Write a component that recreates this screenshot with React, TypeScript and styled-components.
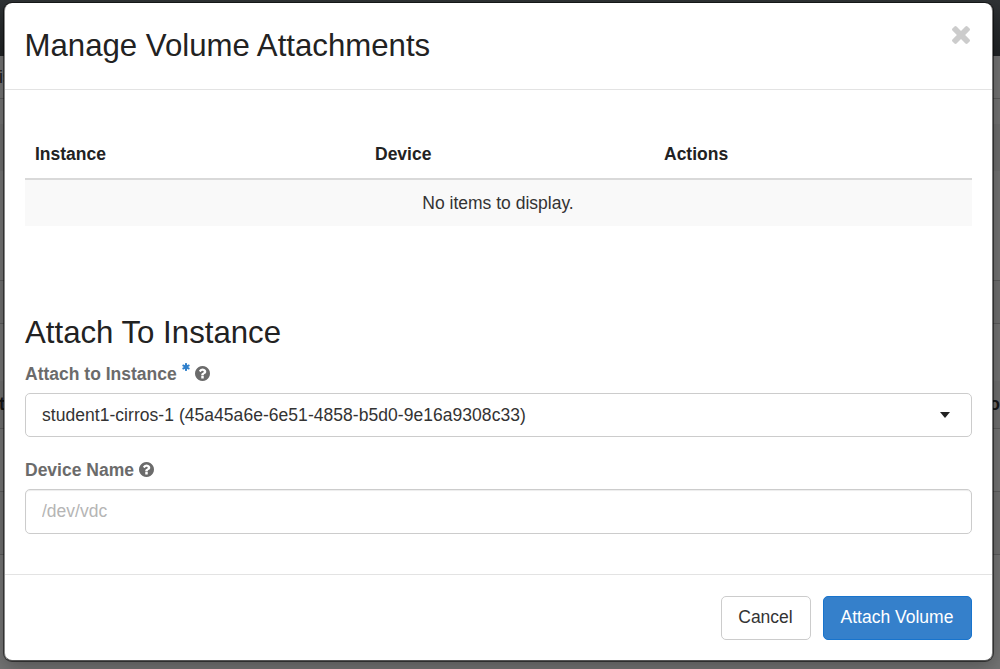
import React from "react";
import styled, { createGlobalStyle } from "styled-components";

const GlobalStyle = createGlobalStyle`
  *, *::before, *::after { box-sizing: border-box; }
  body {
    margin: 0;
    overflow: hidden;
    font-family: "Liberation Sans", Arial, sans-serif;
    font-size: 17.5px;
    color: #333;
  }
`;

const Page = styled.div`
  position: relative;
  display: flex;
  flex-direction: column;
  height: 669px;
  overflow: hidden;
  background: #747474;
`;

const NavBar = styled.div`
  height: 56px;
  flex: none;
  background: linear-gradient(#2f3335, #1f2224);
`;

const PageRow = styled.div<{ $height: number; $shade?: string; $plain?: boolean }>`
  display: flex;
  justify-content: space-between;
  align-items: center;
  flex: none;
  height: ${(p) => p.$height}px;
  background: ${(p) => p.$shade ?? "#737373"};
  border-bottom: ${(p) => (p.$plain ? "0" : "1px solid #5c5c5c")};
  color: #161616;
`;

const PageText = styled.span<{ $bold?: boolean; $shift?: number }>`
  font-weight: ${(p) => (p.$bold ? 700 : 400)};
  margin: 0 ${(p) => p.$shift ?? 0}px;
`;

const Dialog = styled.section`
  position: absolute;
  top: 3px;
  left: 4px;
  width: 989px;
  height: 658px;
  display: flex;
  flex-direction: column;
  background: #fff;
  border: 1px solid transparent;
  border-width: 0 1px 1px;
  border-color: transparent #777 #555 #888;
  border-radius: 8px;
  box-shadow: 0 0 0 1px rgba(0, 0, 0, 0.5), 0 6px 19px rgba(0, 0, 0, 0.28);
`;

const DialogHeader = styled.header`
  display: flex;
  justify-content: space-between;
  align-items: flex-start;
  height: 87px;
  padding: 24px 22px 0 19.5px;
  border-bottom: 1px solid #e3e3e3;
`;

const Heading = styled.h3`
  margin: 0;
  font-size: 31.2px;
  line-height: 38px;
  font-weight: 400;
  color: #222;
`;

const CloseButton = styled.button`
  display: flex;
  margin-top: -1px;
  padding: 0;
  border: 0;
  background: none;
  color: #ccc;
`;

const DialogBody = styled.div`
  flex: 1;
  padding: 40px 20px 0;
`;

const Table = styled.div`
  display: grid;
  grid-template-columns: 340px 289px 1fr;
  margin-bottom: 88px;
`;

const HeadCell = styled.div`
  height: 50px;
  padding: 12px 10px 0;
  line-height: 24px;
  font-weight: 700;
  color: #222;
  border-bottom: 2px solid #d9d9d9;
`;

const EmptyCell = styled.div`
  grid-column: 1 / -1;
  height: 46px;
  line-height: 46px;
  text-align: center;
  text-indent: -1px;
  background: #f9f9f9;
`;

const FieldSet = styled.div`
  padding-top: 10px;
`;

const Field = styled.div`
  margin-bottom: 21px;
`;

const Label = styled.label`
  display: flex;
  align-items: center;
  height: 24px;
  margin-bottom: 7px;
  font-weight: 700;
  color: #6b6b6b;
`;

const RequiredSvg = styled.svg`
  width: 8px;
  height: 8px;
  align-self: flex-start;
  margin: 1px 0 0 5px;
  color: #2f80cc;
`;

const HelpSvg = styled.svg`
  width: 15px;
  height: 15px;
  margin: 0 0 1px 5px;
`;

const SelectBox = styled.div`
  display: flex;
  justify-content: space-between;
  align-items: center;
  height: 44px;
  padding: 0 21px 0 16px;
  border: 1px solid #ccc;
  border-radius: 5px;
  letter-spacing: 0.04px;
`;

const Caret = styled.span`
  border: 5.5px solid transparent;
  border-top: 6px solid #222;
  border-bottom: 0;
`;

const TextInput = styled.input`
  display: block;
  width: 100%;
  height: 45px;
  padding: 0 16px;
  border: 1px solid #ccc;
  border-radius: 5px;
  box-shadow: inset 0 1px 1px rgba(0, 0, 0, 0.075);
  font: inherit;
  &::placeholder { color: #b5b5b5; opacity: 1; }
`;

const DialogFooter = styled.footer`
  display: flex;
  justify-content: flex-end;
  gap: 12px;
  height: 86px;
  padding: 21px 20px 0;
  border-top: 1px solid #e3e3e3;
`;

const Button = styled.button<{ $primary?: boolean }>`
  width: ${(p) => (p.$primary ? 149 : 90)}px;
  height: 44px;
  padding: 0 1px 1px 0;
  font: inherit;
  border-radius: 5px;
  color: ${(p) => (p.$primary ? "#fff" : "#333")};
  background: ${(p) => (p.$primary ? "#3580cb" : "#fff")};
  border: 1px solid ${(p) => (p.$primary ? "#1874cd" : "#ccc")};
`;

const CloseIcon = () => (
  <svg width="18" height="18" viewBox="302 366 1188 1188" fill="currentColor">
    <path d="M1490 1322q0 40-28 68l-136 136q-28 28-68 28t-68-28l-294-294-294 294q-28 28-68 28t-68-28l-136-136q-28-28-28-68t28-68l294-294-294-294q-28-28-28-68t28-68l136-136q28-28 68-28t68 28l294 294 294-294q28-28 68-28t68 28l136 136q28 28 28 68t-28 68l-294 294 294 294q28 28 28 68z" />
  </svg>
);

const RequiredIcon = () => (
  <RequiredSvg viewBox="128 128 1536 1536" fill="currentColor">
    <path d="M1546 1050q46 26 59.5 77.5t-12.5 97.5l-64 110q-26 46-77.5 59.5t-97.5-12.5l-266-153v307q0 52-38 90t-90 38h-128q-52 0-90-38t-38-90v-307l-266 153q-46 26-97.5 12.5t-77.5-59.5l-64-110q-26-46-12.5-97.5t59.5-77.5l266-154-266-154q-46-26-59.5-77.5t12.5-97.5l64-110q26-46 77.5-59.5t97.5 12.5l266 153v-307q0-52 38-90t90-38h128q52 0 90 38t38 90v307l266-153q46-26 97.5-12.5t77.5 59.5l64 110q26 46 12.5 97.5t-59.5 77.5l-266 154z" />
  </RequiredSvg>
);

const HelpIcon = () => (
  <HelpSvg viewBox="128 128 1536 1536" fill="currentColor">
    <path d="M1024 1376v-192q0-14-9-23t-23-9h-192q-14 0-23 9t-9 23v192q0 14 9 23t23 9h192q14 0 23-9t9-23zm256-672q0-88-55.5-163t-138.5-116-170-41q-243 0-371 213-15 24 8 42l132 100q7 6 19 6 16 0 25-12 53-68 86-92 34-24 86-24 48 0 85.5 26t37.5 59q0 38-20 61t-68 45q-63 28-115.5 86.5t-52.5 125.5v36q0 14 9 23t23 9h192q14 0 23-9t9-23q0-19 21.5-49.5t54.5-49.5q32-18 49-28.5t46-35 44.5-48 28-60.5 12.5-81zm384 192q0 209-103 385.5t-279.5 279.5-385.5 103-385.5-103-279.5-279.5-103-385.5 103-385.5 279.5-279.5 385.5-103 385.5 103 279.5 279.5 103 385.5z" />
  </HelpSvg>
);

export default function App() {
  return (
    <>
      <GlobalStyle />
      <Page>
        <NavBar />
        <PageRow $height={43}>
          <PageText $shift={-1}>is</PageText>
        </PageRow>
        <PageRow $height={25} $plain />
        <PageRow $height={47} $shade="#6e6e6e" $plain />
        <PageRow $height={110} />
        <PageRow $height={43} $shade="#6f6f6f" />
        <PageRow $height={57} $plain />
        <PageRow $height={48} $shade="#6f6f6f">
          <PageText $bold $shift={-1}>t</PageText>
          <PageText $bold>o</PageText>
        </PageRow>
        <PageRow $height={63} />
        <PageRow $height={63} $shade="#6f6f6f" />
        <Dialog role="dialog">
          <DialogHeader>
            <Heading>Manage Volume Attachments</Heading>
            <CloseButton aria-label="Close">
              <CloseIcon />
            </CloseButton>
          </DialogHeader>
          <DialogBody>
            <Table>
              <HeadCell>Instance</HeadCell>
              <HeadCell>Device</HeadCell>
              <HeadCell>Actions</HeadCell>
              <EmptyCell>No items to display.</EmptyCell>
            </Table>
            <Heading>Attach To Instance</Heading>
            <FieldSet>
              <Field>
                <Label>
                  Attach to Instance
                  <RequiredIcon />
                  <HelpIcon />
                </Label>
                <SelectBox>
                  student1-cirros-1 (45a45a6e-6e51-4858-b5d0-9e16a9308c33)
                  <Caret />
                </SelectBox>
              </Field>
              <Field>
                <Label>
                  Device Name
                  <HelpIcon />
                </Label>
                <TextInput placeholder="/dev/vdc" />
              </Field>
            </FieldSet>
          </DialogBody>
          <DialogFooter>
            <Button>Cancel</Button>
            <Button $primary>Attach Volume</Button>
          </DialogFooter>
        </Dialog>
      </Page>
    </>
  );
}
